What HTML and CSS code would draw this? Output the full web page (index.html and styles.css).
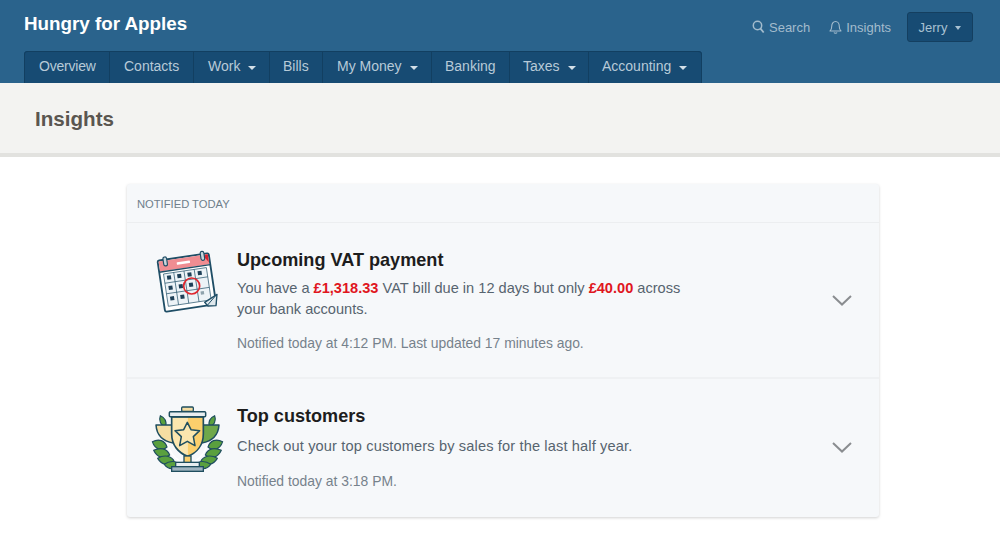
FILE: index.html
```html
<!DOCTYPE html>
<html lang="en">
<head>
<meta charset="utf-8">
<title>Insights</title>
<link rel="stylesheet" href="styles.css">
</head>
<body>
<header class="topbar">
  <div class="topbar-row">
    <div class="brand">Hungry for Apples</div>
    <div class="utils">
      <a class="util util-search"><svg class="util-icon" width="13" height="14" viewBox="0 0 13 14"><circle cx="5.500" cy="5.500" r="4.200" fill="none" stroke="currentColor" stroke-width="1.500"/><path d="M8.500 8.700l3.200 3.800" fill="none" stroke="currentColor" stroke-width="1.800"/></svg>Search</a>
      <a class="util util-insights"><svg class="util-icon" width="13" height="15" viewBox="0 0 13 15"><path d="M1 11c1.300-1 1.700-2.200 1.700-4.500C2.700 3.700 4.300 1.500 6.500 1.500s3.800 2.200 3.800 5c0 2.300.4 3.500 1.700 4.500z" fill="none" stroke="currentColor" stroke-width="1.100" stroke-linejoin="round"/><path d="M5 12.500c.3 1 2.700 1 3 0" fill="none" stroke="currentColor" stroke-width="1.100"/></svg>Insights</a>
      <button class="user-btn">Jerry<span class="caret caret-small"></span></button>
    </div>
  </div>
  <nav class="tabs">
    <a class="tab tab-overview">Overview</a>
    <a class="tab tab-contacts">Contacts</a>
    <a class="tab tab-work">Work<span class="caret"></span></a>
    <a class="tab tab-bills">Bills</a>
    <a class="tab tab-money">My Money<span class="caret"></span></a>
    <a class="tab tab-banking">Banking</a>
    <a class="tab tab-taxes">Taxes<span class="caret"></span></a>
    <a class="tab tab-accounting">Accounting<span class="caret"></span></a>
  </nav>
</header>
<section class="subheader"><h1>Insights</h1></section>
<main class="card">
  <div class="card-head">NOTIFIED TODAY</div>
  <article class="item item-vat">
    <svg class="illus" width="85" height="85" viewBox="0 0 255 255">
      <g transform="rotate(-8.500 125 127)">
        <rect x="48" y="50" width="155" height="155" rx="5" fill="#fff" stroke="#1f4e66" stroke-width="5.500"/>
        <path d="M51 53h149v30H51z" fill="#ef8d92"/>
        <path d="M184 53h16v24z" fill="#d8232f"/>
        <rect x="104" y="63" width="40" height="8" rx="2" fill="#fff"/>
        <path d="M48 85h155" stroke="#1f4e66" stroke-width="4"/>
        <rect x="60" y="92" width="130" height="98" fill="#edf3f7"/>
        <path d="M60 92h130v98H60zM91 92v98M122 92v98M153 92v98M60 120h130M60 152h130" fill="none" stroke="#1f4e66" stroke-width="2"/>
        <g fill="#1d3f57">
          <rect x="69" y="99" width="12" height="12"/><rect x="100" y="99" width="12" height="12"/><rect x="131" y="99" width="12" height="12"/><rect x="162" y="99" width="12" height="12"/>
          <rect x="69" y="130" width="12" height="12"/><rect x="100" y="130" width="12" height="12"/><rect x="131" y="130" width="12" height="12"/>
          <rect x="69" y="162" width="12" height="12"/><rect x="100" y="162" width="12" height="12"/>
        </g>
        <rect x="162" y="160" width="10" height="10" fill="#8fa3ad"/>
        <rect x="65" y="42" width="11" height="27" rx="5.500" fill="#c9d6dc" stroke="#1f4e66" stroke-width="3.500"/>
        <rect x="178" y="42" width="11" height="27" rx="5.500" fill="#c9d6dc" stroke="#1f4e66" stroke-width="3.500"/>
      </g>
      <path d="M179 187l37-24-3 34-24 1z" fill="#dfe8ec" stroke="#1f4e66" stroke-width="4" stroke-linejoin="round"/>
      <path d="M187 196l24-28" stroke="#1f4e66" stroke-width="3"/>
      <circle cx="140" cy="138" r="24" fill="none" stroke="#e0262e" stroke-width="5"/>
    </svg>
    <div class="item-body">
      <h2>Upcoming VAT payment</h2>
      <p class="msg">You have a <b class="amt">£1,318.33</b> VAT bill due in 12 days but only <b class="amt">£40.00</b> across your bank accounts.</p>
      <p class="meta">Notified today at 4:12 PM. Last updated 17 minutes ago.</p>
    </div>
    <svg class="chev" width="20" height="11" viewBox="0 0 20 11"><path d="M1 1l9 8.500L19 1" fill="none" stroke="#8a8d90" stroke-width="2"/></svg>
  </article>
  <article class="item item-top">
    <svg class="illus" width="85" height="85" viewBox="0 0 255 255">
      <defs>
        <g id="wreath" fill="#5aa03e" stroke="#1f4e5f" stroke-width="3.500" stroke-linejoin="round">
          <path d="M62 90C48 86 40 72 46 56 60 62 66 74 62 90z"/>
          <path d="M66 150C52 164 30 158 22 134 42 124 60 130 66 150z"/>
          <path d="M74 174C58 188 36 182 26 160 46 150 66 154 74 174z"/>
          <path d="M88 194C72 208 50 204 38 184 58 172 80 176 88 194z"/>
          <path d="M104 206C90 220 70 218 58 202 74 190 96 190 104 206z"/>
        </g>
      </defs>
      <use href="#wreath"/>
      <use href="#wreath" transform="translate(255 0) scale(-1 1)"/>
      <path d="M68 140c6 26 20 44 42 56M187 140c-6 26-20 44-42 56" fill="none" stroke="#fff" stroke-width="4"/>
      <path d="M80 84H33c2 30 18 48 52 54z" fill="#f6dea2" stroke="#1f4e5f" stroke-width="4.500" stroke-linejoin="round"/>
      <path d="M175 84h47c-2 30-18 48-52 54z" fill="#6fa84a" stroke="#1f4e5f" stroke-width="4.500" stroke-linejoin="round"/>
      <path d="M80 60h48v118c-27-10-48-33-48-68z" fill="#fbe6ae"/>
      <path d="M128 60h47v50c0 35-20 58-47 68z" fill="#fbcf6c"/>
      <path d="M80 60h95v50c0 35-20 58-47 68-27-10-48-33-48-68z" fill="none" stroke="#1f4e5f" stroke-width="5" stroke-linejoin="round"/>
      <rect x="73" y="44" width="109" height="15" rx="3" fill="#e8eef0" stroke="#1f4e5f" stroke-width="4.500"/>
      <rect x="110" y="30" width="35" height="13" rx="3" fill="#f6dea2" stroke="#1f4e5f" stroke-width="4"/>
      <path d="M127 76l11 22 26 3-19 18 5 27-23-13-23 13 5-27-19-18 26-3z" fill="#fbe6ae" stroke="#1f4e5f" stroke-width="4.500" stroke-linejoin="round"/>
      <rect x="117" y="177" width="21" height="20" fill="#fbcf6c" stroke="#1f4e5f" stroke-width="4"/>
      <rect x="92" y="196" width="71" height="13" fill="#e8eef0" stroke="#1f4e5f" stroke-width="4"/>
      <rect x="80" y="209" width="95" height="14" fill="#9fb4c0" stroke="#1f4e5f" stroke-width="4"/>
    </svg>
    <div class="item-body">
      <h2>Top customers</h2>
      <p class="msg">Check out your top customers by sales for the last half year.</p>
      <p class="meta">Notified today at 3:18 PM.</p>
    </div>
    <svg class="chev" width="20" height="11" viewBox="0 0 20 11"><path d="M1 1l9 8.500L19 1" fill="none" stroke="#8a8d90" stroke-width="2"/></svg>
  </article>
</main>
</body>
</html>
```

FILE: styles.css
```css
* { box-sizing: border-box; }
html, body { margin: 0; padding: 0; }
body { background: #fff; font-family: "Liberation Sans", Arial, sans-serif; color: #4f5f6b; height: 539px; overflow: hidden; }

.topbar { background: #2a638c; height: 83px; padding: 0 27px 0 24px; }
.topbar-row { display: flex; justify-content: space-between; height: 51px; }
.brand { font-size: 18.800px; font-weight: 700; color: #fff; padding-top: 13px; line-height: 21px; }
.utils { display: flex; align-items: center; height: 54px; }
.util { display: flex; align-items: center; color: #a3bccd; font-size: 13px; }
.util-icon { margin-right: 4px; }
.util-search { margin-right: 19px; }
.util-insights { margin-right: 16px; }
.user-btn { width: 66px; height: 30px; background: #174b73; border: 1px solid #143f60; border-radius: 3px; color: #a9c1d2; font: 13px "Liberation Sans", Arial, sans-serif; padding: 0; }

.tabs { display: flex; width: 678px; height: 32px; background: #174b73; border-radius: 4px 4px 0 0; box-shadow: inset 0 1px 0 #123f61; }
.tab { display: flex; align-items: center; height: 32px; padding: 0 0 2px 14px; font-size: 14px; color: #b7cad8; border-left: 1px solid #123f61; }
.tab:first-child { border-top-left-radius: 4px; }
.tab:last-child { border-right: 1px solid #123f61; border-top-right-radius: 4px; }
.tab-overview { width: 85px; letter-spacing: -.2px; }
.tab-contacts { width: 84px; }
.tab-work { width: 76px; }
.tab-bills { width: 53px; padding-left: 13px; }
.tab-money { width: 109px; }
.tab-banking { width: 78px; padding-left: 13px; }
.tab-taxes { width: 79px; padding-left: 13px; }
.tab-accounting { width: 114px; padding-left: 13px; }
.caret { display: inline-block; width: 0; height: 0; margin-left: 8px; margin-top: 3px; border-left: 4.500px solid transparent; border-right: 4.500px solid transparent; border-top: 4px solid #d3dfe8; }
.caret-small { margin-top: 0; border-left-width: 3.500px; border-right-width: 3.500px; border-top-color: #a9c1d2; position: relative; top: -2px; }

.subheader { height: 74px; background: #f3f3f1; border-bottom: 4px solid #e2e2df; padding: 24px 0 0 35px; }
.subheader h1 { margin: 0; font-size: 20.600px; line-height: 24px; font-weight: 700; color: #5a5650; }

.card { width: 752px; height: 333px; margin: 27px 0 0 127px; background: #f6f8fa; border-radius: 3px; box-shadow: 0 1px 3px rgba(0,0,0,.18); }
.card-head { height: 39px; padding: 1px 0 0 10px; line-height: 38px; font-size: 11.200px; color: #6f7f8b; border-bottom: 1px solid #eceef0; }
.item { display: flex; padding: 0 27px 0 18px; border-bottom: 2px solid #eff1f3; }
.item:last-child { border-bottom: 0; }
.item-vat { height: 156px; }
.item-top { height: 138px; }
.illus { flex: none; margin-right: 7px; }
.item-vat .illus { margin-top: 17px; }
.item-top .illus { margin-top: 18px; }
.item-body { width: 460px; margin-right: auto; padding-top: 25px; }
.item-body h2 { margin: 0 0 8px; font-size: 18.100px; line-height: 24px; font-weight: 700; color: #1d1d1d; }
.item-vat h2 { margin-bottom: 6px; }
.msg { margin: 0 0 14px; font-size: 14.600px; line-height: 21px; color: #57646f; }
.item-vat .msg { margin-bottom: 13px; }
.item-top .msg { letter-spacing: .14px; }
.amt { color: #e0161e; }
.meta { margin: 0; font-size: 13.900px; line-height: 20px; color: #76828c; }
.chev { flex: none; align-self: center; }
.item-top .chev { margin-bottom: 2px; }
```
